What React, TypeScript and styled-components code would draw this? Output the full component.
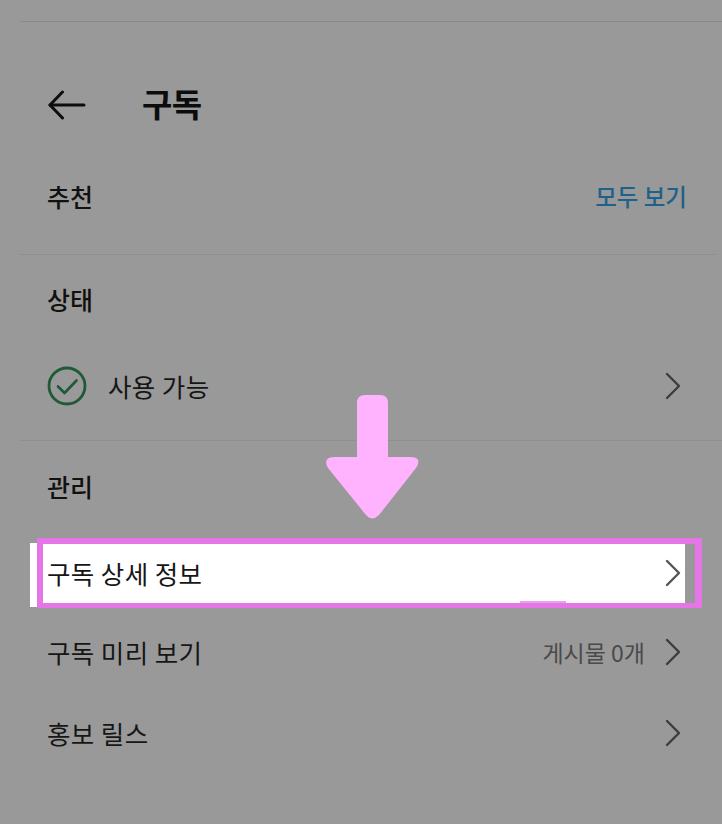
import React from "react";
import styled, { createGlobalStyle } from "styled-components";

const Global = createGlobalStyle`
  html, body { margin: 0; padding: 0; background: #999999; }
  body { font-family: "Noto Sans CJK KR", "Liberation Sans", sans-serif; }
`;

const Page = styled.div`
  position: relative;
  width: 722px;
  height: 824px;
  overflow: hidden;
  padding-top: 21px;
  box-sizing: border-box;
  background: #999999;
  display: flex;
  flex-direction: column;
`;

const Divider = styled.div<{ $tone?: string; $gone?: number }>`
  height: 1px;
  flex: none;
  margin-left: 20px;
  margin-right: ${(p) => p.$gone ?? 0}px;
  background: ${(p) => p.$tone ?? "#8a8a8a"};
`;

const Header = styled.header`
  height: 162px;
  flex: none;
  display: flex;
  align-items: center;
  padding-left: 47px;
`;

const BackButton = styled.div`
  width: 40px;
  height: 34px;
  margin-right: 55px;
  color: #0d0d0d;
  display: flex;
`;

const Title = styled.h1`
  margin: 0;
  font-size: 33px;
  line-height: 40px;
  font-weight: 700;
  color: #0c0c0c;
  letter-spacing: -0.5px;
`;

const SectionRow = styled.div<{ $height: number; $lift: number }>`
  height: ${(p) => p.$height}px;
  flex: none;
  box-sizing: border-box;
  display: flex;
  align-items: center;
  justify-content: space-between;
  padding: 0 35px ${(p) => p.$lift}px 47px;
`;

const SectionTitle = styled.h2`
  margin: 0;
  font-size: 25px;
  line-height: 32px;
  font-weight: 500;
  color: #111111;
`;

const SeeAll = styled.span`
  font-size: 23.5px;
  line-height: 32px;
  font-weight: 500;
  color: #1f6289;
`;

const Row = styled.div<{ $height: number; $lift: number }>`
  height: ${(p) => p.$height}px;
  flex: none;
  box-sizing: border-box;
  display: flex;
  align-items: center;
  padding: 0 41px ${(p) => p.$lift}px 47px;
`;

const HighlightRow = styled.div`
  position: relative;
  height: 59px;
  flex: none;
  box-sizing: border-box;
  display: flex;
  align-items: center;
  margin-left: 30px;
  margin-right: 37px;
  padding: 0 4px 2px 17px;
  background: #ffffff;
`;

const HighlightEdge = styled.div`
  position: absolute;
  top: -1px;
  bottom: -4px;
  left: 0;
  width: 8px;
  background: #ffffff;
`;

const HighlightFrame = styled.div`
  position: absolute;
  top: -6px;
  left: 7px;
  right: -17px;
  bottom: -5px;
  border: solid #e676e8;
  border-width: 6px 7px 5px 6px;
  box-sizing: border-box;
  pointer-events: none;
`;

const FrameSmudge = styled.div`
  position: absolute;
  left: 490px;
  bottom: 0;
  width: 46px;
  height: 2px;
  background: #e9a0ea;
`;

const RowLabel = styled.span`
  flex: 1;
  font-size: 25.5px;
  line-height: 34px;
  font-weight: 400;
  letter-spacing: 0.4px;
  color: #161616;
`;

const RowValue = styled.span`
  font-size: 23px;
  line-height: 30px;
  color: #4a4a4a;
  margin-right: 20px;
`;

const Chevron = styled.svg<{ $tone?: string }>`
  width: 16px;
  height: 28px;
  flex: none;
  color: ${(p) => p.$tone ?? "#3d3d3d"};
`;

const StatusIcon = styled.svg`
  width: 40px;
  height: 40px;
  flex: none;
  margin-right: 21px;
`;

const PinkArrow = styled.svg`
  position: absolute;
  left: 325px;
  top: 395px;
  width: 95px;
  height: 125px;
`;

const ChevronIcon = ({ tone }: { tone?: string }) => (
  <Chevron $tone={tone} viewBox="0 0 16 28" fill="none" stroke="currentColor" strokeWidth="2.4" strokeLinecap="round" strokeLinejoin="round">
    <path d="M2 2 L14 14 L2 26" />
  </Chevron>
);

export default function App() {
  return (
    <Page>
      <Global />
      <Divider />
      <Header>
        <BackButton>
          <svg width="40" height="34" viewBox="0 0 40 34" fill="none" stroke="currentColor" strokeWidth="3" strokeLinecap="round" strokeLinejoin="round">
            <path d="M3 19 H37" />
            <path d="M15.5 6 L3 19 L15.5 32" />
          </svg>
        </BackButton>
        <Title>구독</Title>
      </Header>
      <SectionRow $height={70} $lift={46}>
        <SectionTitle>추천</SectionTitle>
        <SeeAll>모두 보기</SeeAll>
      </SectionRow>
      <Divider $tone="#8d8d8d" $gone={7} />
      <SectionRow $height={93} $lift={5}>
        <SectionTitle>상태</SectionTitle>
      </SectionRow>
      <Row $height={92} $lift={16}>
        <StatusIcon viewBox="0 0 40 40" fill="none" strokeLinecap="round" strokeLinejoin="round">
          <circle cx="20" cy="20" r="18" stroke="#1f5a37" strokeWidth="2.8" />
          <path d="M11 20.5 L17.5 27 L29.5 14.5" stroke="#1f5a37" strokeWidth="2.6" />
        </StatusIcon>
        <RowLabel>사용 가능</RowLabel>
        <ChevronIcon />
      </Row>
      <Divider $tone="#909090" />
      <SectionRow $height={103} $lift={13}>
        <SectionTitle>관리</SectionTitle>
      </SectionRow>
      <HighlightRow>
        <HighlightEdge />
        <RowLabel>구독 상세 정보</RowLabel>
        <ChevronIcon tone="#555555" />
        <HighlightFrame />
        <FrameSmudge />
      </HighlightRow>
      <Row $height={102} $lift={4}>
        <RowLabel>구독 미리 보기</RowLabel>
        <RowValue>게시물 0개</RowValue>
        <ChevronIcon />
      </Row>
      <Row $height={59} $lift={3}>
        <RowLabel>홍보 릴스</RowLabel>
        <ChevronIcon />
      </Row>
      <PinkArrow viewBox="0 0 95 125">
        <path
          d="M40 0 H55 Q63 0 63 8 V62 H85 Q98 62 91 73 L54 120 Q47 127 41 120 L3 73 Q-3 62 10 62 H32 V8 Q32 0 40 0 Z"
          fill="#ffb3ff"
        />
      </PinkArrow>
    </Page>
  );
}
